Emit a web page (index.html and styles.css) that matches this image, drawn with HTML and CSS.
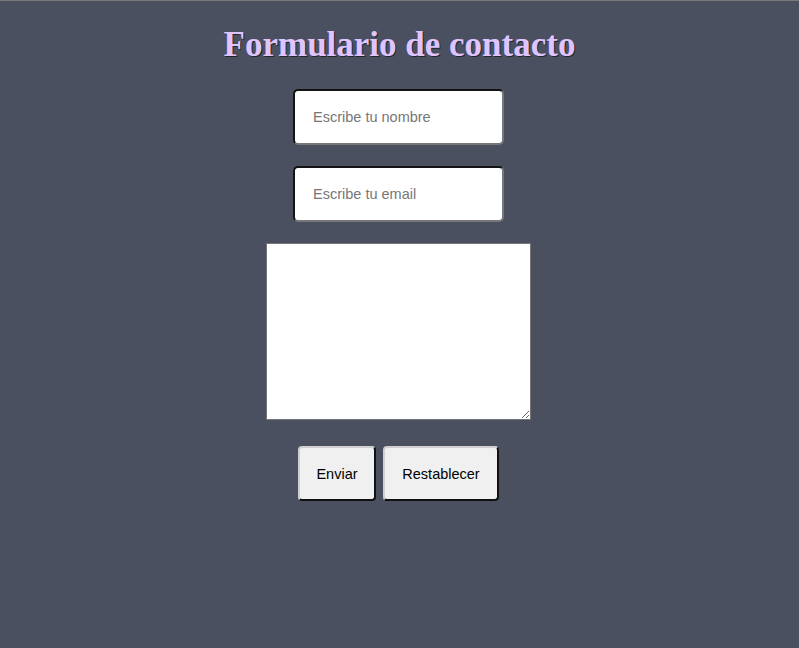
FILE: index.html
```html
<!DOCTYPE html>
<html lang="es">
<head>
<meta charset="utf-8">
<title>Formulario de contacto</title>
<link rel="stylesheet" href="styles.css">
</head>
<body>
<h1 class="title">Formulario de contacto</h1>
<form class="form">
  <input class="field" type="text" placeholder="Escribe tu nombre">
  <input class="field" type="email" placeholder="Escribe tu email">
  <textarea class="message"></textarea>
  <div class="actions">
    <button class="btn btn-send" type="submit">Enviar</button>
    <button class="btn btn-reset" type="reset">Restablecer</button>
  </div>
</form>
</body>
</html>
```
FILE: styles.css
```css
html {
  background: #4a5060;
  border-top: 1px solid #7a7a7a;
}
body {
  margin: 0;
  padding: 0;
  background: #4a5060;
  font-family: "Liberation Sans", Arial, sans-serif;
}
.title {
  margin: 0;
  padding-top: 24px;
  text-align: center;
  font-family: "Liberation Serif", "Times New Roman", serif;
  font-weight: bold;
  font-size: 35px;
  line-height: 40px;
  color: #e0c4ff;
  text-shadow: 1px 1px 0 #1e2a2a;
}
.form {
  display: flex;
  flex-direction: column;
  align-items: center;
  padding-top: 24px;
  padding-right: 2px;
}
.field {
  box-sizing: border-box;
  width: 211px;
  height: 56px;
  margin: 0 0 21px 0;
  padding: 0 18px;
  border: 2px solid;
  border-color: #141414 #777 #777 #141414;
  border-radius: 5px;
  background: #fff;
  font-family: "Liberation Sans", Arial, sans-serif;
  font-size: 14.5px;
  color: #000;
  outline: none;
}
.field::placeholder {
  color: #777;
}
.message {
  box-sizing: border-box;
  width: 265px;
  height: 177px;
  margin: 0 0 26px 0;
  border: 1px solid #767676;
  background: #fff;
  padding: 2px;
}
.actions {
  display: flex;
  gap: 7px;
}
.btn {
  box-sizing: border-box;
  height: 55px;
  padding: 0;
  border: 2px solid;
  border-color: #d0d0d0 #111 #111 #d0d0d0;
  border-radius: 4px;
  background: #f0f0f0;
  font-family: "Liberation Sans", Arial, sans-serif;
  font-size: 14.5px;
  color: #000;
}
.btn-send {
  width: 78px;
}
.btn-reset {
  width: 116px;
}
```
